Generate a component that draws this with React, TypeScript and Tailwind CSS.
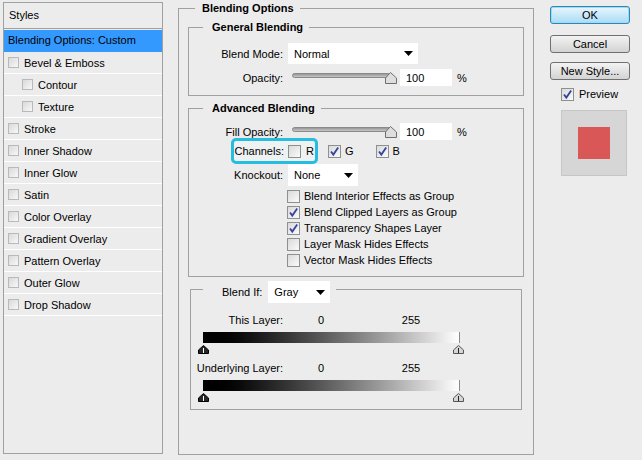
import { useId } from 'react';

const styleRows = [
  { label: 'Bevel & Emboss', indent: false },
  { label: 'Contour', indent: true },
  { label: 'Texture', indent: true },
  { label: 'Stroke', indent: false },
  { label: 'Inner Shadow', indent: false },
  { label: 'Inner Glow', indent: false },
  { label: 'Satin', indent: false },
  { label: 'Color Overlay', indent: false },
  { label: 'Gradient Overlay', indent: false },
  { label: 'Pattern Overlay', indent: false },
  { label: 'Outer Glow', indent: false },
  { label: 'Drop Shadow', indent: false },
];

const advancedChecks = [
  { label: 'Blend Interior Effects as Group', on: false },
  { label: 'Blend Clipped Layers as Group', on: true },
  { label: 'Transparency Shapes Layer', on: true },
  { label: 'Layer Mask Hides Effects', on: false },
  { label: 'Vector Mask Hides Effects', on: false },
];

function Check({ on, small }: { on?: boolean; small?: boolean }) {
  return (
    <span
      className={
        small
          ? 'flex h-[11px] w-[11px] shrink-0 border border-[#b9b9b9] bg-gradient-to-br from-[#d9d9d9] to-[#f8f8f8]'
          : 'flex h-[13px] w-[13px] shrink-0 items-center justify-center border border-[#8e8f8f] bg-gradient-to-br from-[#dadada] to-[#fafafa]'
      }
    >
      {on && (
        <svg width="11" height="11" viewBox="0 0 11 11">
          <path d="M2 5.5 L4.3 8.6 L9.2 1.6" fill="none" stroke="#33449a" strokeWidth="1.8" />
        </svg>
      )}
    </span>
  );
}

function Arrow() {
  return (
    <svg width="9" height="5" viewBox="0 0 9 5">
      <polygon points="0,0 9,0 4.5,5" fill="#000" />
    </svg>
  );
}

function Select({ value, width }: { value: string; width: string }) {
  return (
    <div className={`flex h-full items-center justify-between bg-white pl-[6px] pr-[5px] ${width}`}>
      <span>{value}</span>
      <Arrow />
    </div>
  );
}

function Slider() {
  const id = useId();
  return (
    <svg width="110" height="17" viewBox="0 0 110 17" className="shrink-0">
      <defs>
        <linearGradient id={id} x1="0" y1="0" x2="0" y2="1">
          <stop offset="0" stopColor="#8f8f8f" />
          <stop offset="1" stopColor="#cfcfcf" />
        </linearGradient>
      </defs>
      <rect x="4.5" y="4.5" width="98" height="4" rx="2" fill={`url(#${id})`} stroke="#8a8a8a" />
      <polygon
        points="102.5,3.5 108.5,9 108.5,14.5 97.5,14.5 97.5,9"
        fill="#dedede"
        stroke="#6f6f6f"
      />
    </svg>
  );
}

function Handle({ dark }: { dark?: boolean }) {
  return (
    <svg width="11" height="9" viewBox="0 0 11 9">
      <polygon
        points="5.5,0.5 10.5,5 10.5,8.5 0.5,8.5 0.5,5"
        fill={dark ? '#262626' : '#d6d6d6'}
        stroke={dark ? '#000' : '#555'}
      />
      <line x1="5.5" y1="3" x2="5.5" y2="8" stroke={dark ? '#fff' : '#222'} />
    </svg>
  );
}

function PercentRow({ label }: { label: string }) {
  return (
    <div className="flex h-[17px] items-center">
      <span className="w-[94px] text-right">{label}</span>
      <span className="ml-[5px]">
        <Slider />
      </span>
      <span className="ml-[2px] flex h-[17px] w-[52px] items-center bg-white pl-[6px]">100</span>
      <span className="ml-[5px]">%</span>
    </div>
  );
}

function StylesPanel() {
  return (
    <div className="ml-[3px] mt-[2px] h-[452px] w-[160px] shrink-0 border border-[#a0a0a0]">
      <div className="h-[26px] border-b border-[#a0a0a0] pl-[5px] leading-[24px]">Styles</div>
      <div className="mt-[1px] h-[22px] bg-[#3399ff] pl-[4px] leading-[20px]">Blending Options: Custom</div>
      {styleRows.map((r) => (
        <div
          key={r.label}
          className={`flex h-[22px] items-center border-b border-white ${r.indent ? 'pl-[18px]' : 'pl-[4px]'}`}
        >
          <Check small />
          <span className="ml-[5px]">{r.label}</span>
        </div>
      ))}
    </div>
  );
}

function BlendBar() {
  return (
    <>
      <div className="ml-[12px] mt-[5px] h-[11px] w-[257px] border-r border-[#8a8a8a] bg-gradient-to-r from-black to-white" />
      <div className="ml-[7px] mt-[2px] flex w-[266px] justify-between">
        <Handle dark />
        <Handle />
      </div>
    </>
  );
}

function BlendingOptions() {
  return (
    <fieldset className="ml-[15px] mt-[1px] h-[454px] w-[356px] shrink-0 border border-[#a0a0a0] p-0">
      <legend className="ml-[16px] pl-[7px] pr-[6px] font-bold">Blending Options</legend>
      <div className="flex flex-col px-[9px]">
        <fieldset className="mt-[5px] h-[76px] border border-[#a0a0a0] p-0">
          <legend className="ml-[14px] pl-[9px] pr-[6px] font-bold">General Blending</legend>
          <div className="mt-[9px] flex h-[21px] items-center">
            <span className="w-[94px] text-right">Blend Mode:</span>
            <div className="ml-[5px] h-[21px]">
              <Select value="Normal" width="w-[130px]" />
            </div>
          </div>
          <div className="mt-[5px]">
            <PercentRow label="Opacity:" />
          </div>
        </fieldset>

        <fieldset className="mt-[5px] h-[176px] border border-[#a0a0a0] p-0">
          <legend className="ml-[14px] pl-[9px] pr-[6px] font-bold">Advanced Blending</legend>
          <div className="mt-[8px]">
            <PercentRow label="Fill Opacity:" />
          </div>
          <div className="mt-[1px] flex h-[20px] items-center">
            <div className="ml-[45px] flex h-[20px] w-[81px] items-center rounded-[2px] bg-[#eef2f3] outline-[3px] outline-[#26bde0] outline-solid">
              <span className="w-[50px] text-right">Channels:</span>
              <span className="ml-[4px]">
                <Check />
              </span>
              <span className="ml-[5px]">R</span>
            </div>
            <span className="ml-[13px]">
              <Check on />
            </span>
            <span className="ml-[4px]">G</span>
            <span className="ml-[22px]">
              <Check on />
            </span>
            <span className="ml-[4px]">B</span>
          </div>
          <div className="mt-[3px] flex h-[22px] items-center">
            <span className="w-[94px] text-right">Knockout:</span>
            <div className="ml-[5px] h-[22px]">
              <Select value="None" width="w-[70px]" />
            </div>
          </div>
          <div className="mt-[2px] flex flex-col">
            {advancedChecks.map((c) => (
              <div key={c.label} className="flex h-[16px] items-center pl-[98px]">
                <Check on={c.on} />
                <span className="ml-[4px]">{c.label}</span>
              </div>
            ))}
          </div>
        </fieldset>

        <fieldset className="mx-[2px] mt-[4px] h-[129px] border border-[#a0a0a0] p-0">
          <legend className="ml-[12px] flex h-[16px] items-start pl-[19px] pr-[6px]">
            <span className="mt-[4px]">Blend If:</span>
            <div className="ml-[6px] h-[22px] shrink-0">
              <Select value="Gray" width="w-[62px]" />
            </div>
          </legend>
          <div className="mt-[16px] flex h-[14px] items-center">
            <span className="w-[92px] text-right">This Layer:</span>
            <span className="ml-[32px] w-[12px] text-center">0</span>
            <span className="ml-[72px] w-[24px] text-center">255</span>
          </div>
          <BlendBar />
          <div className="mt-[7px] flex h-[14px] items-center">
            <span className="w-[92px] text-right">Underlying Layer:</span>
            <span className="ml-[32px] w-[12px] text-center">0</span>
            <span className="ml-[72px] w-[24px] text-center">255</span>
          </div>
          <BlendBar />
        </fieldset>
      </div>
    </fieldset>
  );
}

function RightColumn() {
  const btn =
    'flex h-[18px] w-[80px] items-center justify-center rounded-[3px] border border-[#707070] bg-gradient-to-b from-[#f3f3f3] to-[#d3d3d3]';
  return (
    <div className="ml-[16px] mt-[6px] flex w-[80px] shrink-0 flex-col">
      <div className="flex h-[18px] w-[80px] items-center justify-center rounded-[3px] border border-[#3c7fb1] bg-gradient-to-b from-[#e8f6fd] to-[#a9dbf6] shadow-[inset_0_0_0_1px_#8fe0f8]">
        OK
      </div>
      <div className={`mt-[11px] ${btn}`}>Cancel</div>
      <div className={`mt-[9px] ${btn}`}>New Style...</div>
      <div className="mt-[7px] flex h-[14px] items-center pl-[11px]">
        <Check on />
        <span className="ml-[5px]">Preview</span>
      </div>
      <div className="ml-[11px] mt-[9px] flex h-[66px] w-[66px] items-center justify-center border border-[#c6c6c6] bg-[#d6d6d6]">
        <div className="h-[32px] w-[32px] bg-[#d95757]" />
      </div>
    </div>
  );
}

export default function App() {
  return (
    <div className="flex h-[460px] w-[642px] items-start overflow-hidden bg-[#ececec] font-['Liberation_Sans',Arial,sans-serif] text-[11px] leading-[14px] text-black">
      <StylesPanel />
      <BlendingOptions />
      <RightColumn />
    </div>
  );
}
